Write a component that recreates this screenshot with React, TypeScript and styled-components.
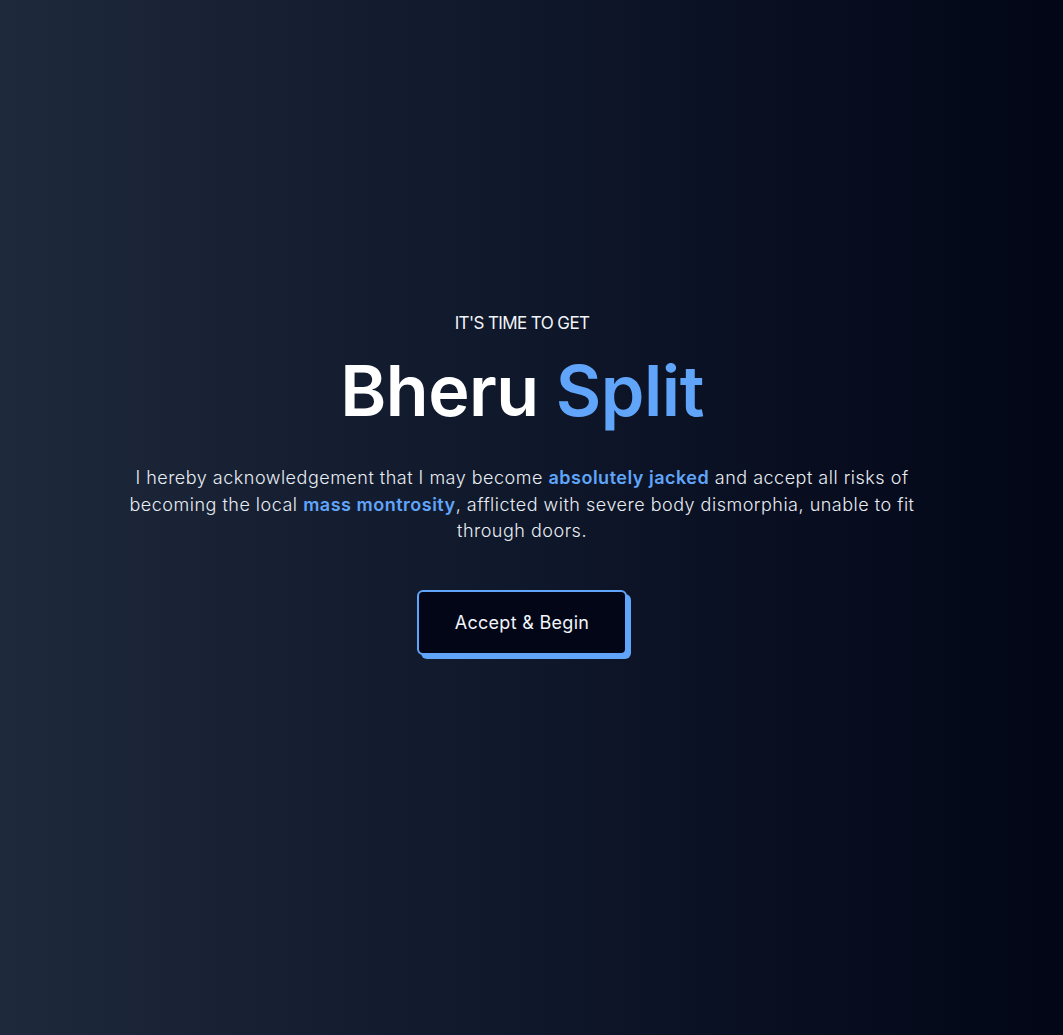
import React from "react";
import styled, { createGlobalStyle } from "styled-components";

const Global = createGlobalStyle`
  html, body { margin: 0; padding: 0; }
  body { font-family: "Inter", "Noto Sans", sans-serif; }
  * { box-sizing: border-box; }
`;

const Page = styled.main`
  min-height: 100vh;
  width: 100%;
  background: linear-gradient(to right, #1e293b 0%, #0f172a 50%, #020617 100%);
  display: flex;
  flex-direction: column;
  align-items: center;
  padding: 309px 19px 0 0;
  color: #f8fafc;
  text-align: center;
`;

const Eyebrow = styled.p`
  margin: 0;
  font-size: 17px;
  line-height: 28px;
  font-weight: 400;
  letter-spacing: -0.6px;
  color: #f1f5f9;
  text-transform: uppercase;
`;

const Title = styled.h1`
  margin: 14px 0 0;
  font-size: 70px;
  line-height: 80px;
  font-weight: 600;
  color: #ffffff;
  letter-spacing: -0.5px;
`;

const Accent = styled.span<{ $bold?: boolean }>`
  color: #60a5fa;
  font-weight: ${(p) => (p.$bold ? 600 : "inherit")};
`;

const Body = styled.p`
  margin: 34px 0 0;
  max-width: 800px;
  font-size: 18px;
  line-height: 26.5px;
  font-weight: 300;
  letter-spacing: 0.5px;
  color: #e8edf3;
`;

const Button = styled.button`
  margin-top: 45px;
  width: 210px;
  height: 65px;
  background: #020617;
  color: #f1f5f9;
  border: 2px solid #60a5fa;
  border-radius: 6px;
  box-shadow: 4px 4px 0 #60a5fa;
  font-family: inherit;
  font-size: 18px;
  font-weight: 400;
  letter-spacing: 0.3px;
  cursor: pointer;
`;

export default function App() {
  return (
    <>
      <Global />
      <Page>
        <Eyebrow>It's time to get</Eyebrow>
        <Title>
          Bheru <Accent>Split</Accent>
        </Title>
        <Body>
          I hereby acknowledgement that I may become <Accent $bold>absolutely jacked</Accent> and
          accept all risks of becoming the local <Accent $bold>mass montrosity</Accent>, afflicted
          with severe body dismorphia, unable to fit through doors.
        </Body>
        <Button>Accept &amp; Begin</Button>
      </Page>
    </>
  );
}
